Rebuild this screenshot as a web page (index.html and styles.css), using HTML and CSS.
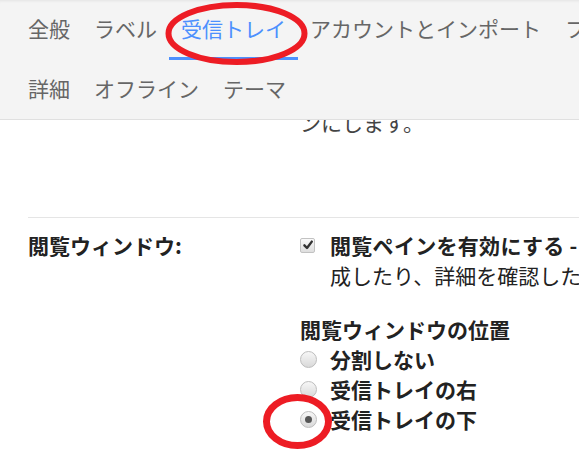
FILE: index.html
```html
<!DOCTYPE html>
<html lang="ja">
<head>
<meta charset="utf-8">
<title>設定 - 受信トレイ</title>
<link rel="stylesheet" href="styles.css">
</head>
<body>
<header class="tabs">
  <nav class="tab-row">
    <span class="tab">全般</span>
    <span class="tab">ラベル</span>
    <span class="tab active">受信トレイ</span>
    <span class="tab">アカウントとインポート</span>
    <span class="tab">フィルタとブロック中のアドレス</span>
  </nav>
  <nav class="tab-row">
    <span class="tab">詳細</span>
    <span class="tab">オフライン</span>
    <span class="tab">テーマ</span>
  </nav>
</header>
<main class="content">
  <section class="setting prev">
    <div class="label"></div>
    <div class="value">
      <p class="line muted">ンにします。</p>
    </div>
  </section>
  <section class="setting reading">
    <div class="label">閲覧ウィンドウ:</div>
    <div class="value">
      <p class="line">
        <span class="checkbox"><svg viewBox="0 0 12 12" width="12" height="12"><path d="M2.4 6.3 L5 9 L9.8 2.6" fill="none" stroke="#333" stroke-width="2.4" stroke-linecap="round" stroke-linejoin="round"/></svg></span>
        <b class="opt-title">閲覧ペインを有効にする&nbsp;-</b><span class="opt-desc">メールの横に閲覧ペインを表示して、返信を作</span>
      </p>
      <p class="line indent">成したり、詳細を確認したりできます。</p>
      <p class="line heading">閲覧ウィンドウの位置</p>
      <p class="line radio-row"><span class="radio"></span><b>分割しない</b></p>
      <p class="line radio-row"><span class="radio"></span><b>受信トレイの右</b></p>
      <p class="line radio-row"><span class="radio checked"></span><b>受信トレイの下</b></p>
    </div>
  </section>
</main>
<svg class="marks" width="579" height="452" viewBox="0 0 579 452">
  <ellipse cx="236.5" cy="33.5" rx="68" ry="28.5" fill="none" stroke="#ed1c24" stroke-width="6"/>
  <ellipse cx="297.5" cy="421.5" rx="31" ry="24" fill="none" stroke="#ed1c24" stroke-width="7"/>
</svg>
</body>
</html>
```
FILE: styles.css
```css
html, body {
  margin: 0;
  padding: 0;
}
body {
  position: relative;
  width: 579px;
  height: 452px;
  overflow: hidden;
  background: #ffffff;
  font-family: "Noto Sans CJK JP", "Noto Sans", sans-serif;
  font-size: 21px;
  line-height: 30px;
  color: #222;
}
p { margin: 0; }
b { font-weight: 700; }

.tabs {
  height: 120px;
  background: #f4f4f4;
  box-shadow: inset 0 -1px 0 #e0e0e0, inset 0 3px 3px -2px rgba(0,0,0,0.07);
  padding-left: 16px;
  overflow: hidden;
}
.tab-row {
  display: flex;
  height: 60px;
  white-space: nowrap;
}
.tab {
  flex: none;
  height: 57px;
  line-height: 57px;
  padding: 0 12px;
  border-bottom: 3px solid transparent;
  color: #666;
}
.tab.active {
  color: #4d90fe;
  border-bottom-color: #4d90fe;
}

.content {
  overflow: hidden;
}
.setting {
  display: grid;
  grid-template-columns: 272px max-content;
  margin-left: 28px;
}
.prev {
  margin-top: -13px;
  padding-bottom: 80px;
}
.reading {
  border-top: 1px solid #e5e5e5;
  padding-top: 12px;
}
.label {
  font-weight: 700;
  white-space: nowrap;
}
.line {
  display: flex;
  align-items: center;
  height: 30px;
  white-space: nowrap;
}
.muted { color: #444; }
.indent { padding-left: 30px; }
.heading {
  margin-top: 24px;
  font-weight: 700;
}
.opt-title {
  letter-spacing: 0.3px;
}
.opt-desc {
  margin-left: 12px;
}
.checkbox {
  flex: none;
  box-sizing: border-box;
  width: 15px;
  height: 15px;
  margin-right: 15px;
  border: 1px solid #c2c2c2;
  border-radius: 2px;
  background: linear-gradient(#fafafa, #dedede);
  display: flex;
  align-items: center;
  justify-content: center;
}
.radio {
  flex: none;
  box-sizing: border-box;
  width: 17px;
  height: 17px;
  margin-right: 13px;
  border: 1px solid #bdbdbd;
  border-radius: 50%;
  background: linear-gradient(#f7f7f7, #d9d9d9);
  display: flex;
  align-items: center;
  justify-content: center;
}
.radio.checked::after {
  content: "";
  width: 7px;
  height: 7px;
  border-radius: 50%;
  background: #555;
}
.marks {
  position: absolute;
  top: 0;
  left: 0;
  pointer-events: none;
}
```
